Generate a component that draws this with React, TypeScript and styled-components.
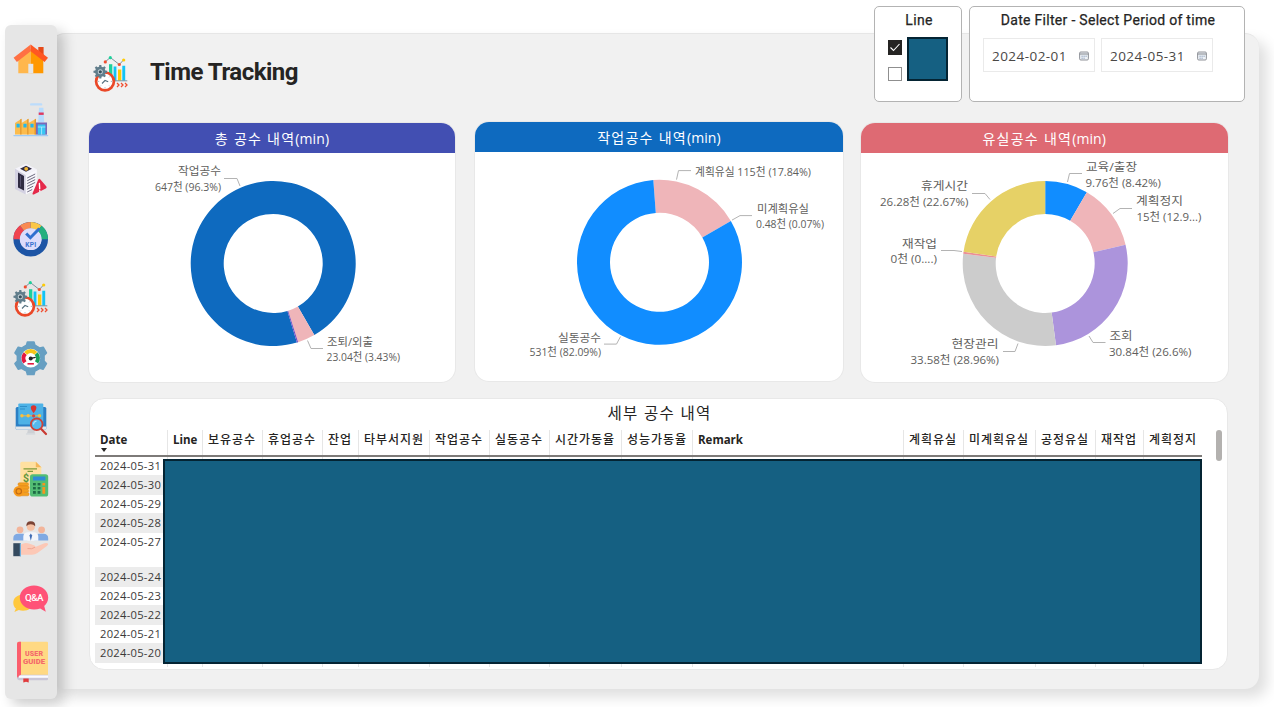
import React from 'react';
import styled, { createGlobalStyle } from 'styled-components';

const SANS = '"Open Sans", "Noto Sans", "Noto Sans CJK KR", sans-serif';
const DIN = 'Roboto, "Noto Sans CJK KR", sans-serif';

const GlobalStyle = createGlobalStyle`
  * { box-sizing: border-box; }
  body { margin: 0; background: #fff; font-family: ${SANS}; color: #252423; overflow: hidden; }
  svg { display: block; }
`;

/* ---------- page shell ---------- */

const Page = styled.div`
  display: flex;
  align-items: flex-start;
  width: 1274px;
  height: 707px;
  padding: 25px 0 0 5px;
  overflow: hidden;
`;

const Sidebar = styled.nav`
  display: flex;
  flex-direction: column;
  align-items: center;
  gap: 24px;
  width: 52px;
  height: 674px;
  padding-top: 15.5px;
  background: #e6e6e6;
  border-radius: 6px;
  box-shadow: 7px 6px 13px rgba(0, 0, 0, 0.2);
  z-index: 1;
`;

const Panel = styled.main`
  width: 1208px;
  height: 656px;
  margin: 8px 0 0 -6px;
  padding: 0 0 0 38px;
  background: #f1f1f1;
  border-radius: 14px;
  border-top: 1px solid #e6e6e6;
  box-shadow: 8px 8px 14px rgba(0, 0, 0, 0.13);
`;

const Header = styled.header`
  display: flex;
  align-items: flex-start;
  margin-top: -28px;
  height: 117px;
`;

const TitleBlock = styled.div`
  display: flex;
  align-items: center;
  gap: 21px;
  width: 785px;
  padding: 50px 0 0 4px;
`;

const Title = styled.h1`
  margin: -4px 0 0;
  font: 700 24px/30px ${DIN};
  letter-spacing: -0.5px;
`;

/* ---------- filters ---------- */

const FilterCard = styled.section<{ $w: number }>`
  width: ${(p) => p.$w}px;
  height: 96px;
  margin-right: 7px;
  background: #fff;
  border: 1px solid #b3b3b3;
  border-radius: 5px;
`;

const FilterTitle = styled.h2`
  margin: 4px 0 0 2px;
  font: 400 14px/18px ${DIN};
  letter-spacing: 0.3px;
  -webkit-text-stroke: 0.25px #252423;
  text-align: center;
`;

const LineOptions = styled.div`
  display: flex;
  gap: 5px;
  padding: 8px 0 0 13px;
`;

const Checks = styled.div`
  display: flex;
  flex-direction: column;
  gap: 12px;
  padding-top: 3px;
`;

const Check = styled.div<{ $on?: boolean }>`
  display: grid;
  place-items: center;
  width: 14px;
  height: ${(p) => (p.$on ? 14.5 : 14)}px;
  background: ${(p) => (p.$on ? '#252423' : '#fff')};
  border: 1px solid ${(p) => (p.$on ? '#252423' : '#8f8f8f')};
`;

const Swatch = styled.div`
  width: 41px;
  height: 44px;
  background: #156082;
  border: 2px solid #042433;
`;

const DateInputs = styled.div`
  display: flex;
  gap: 6px;
  padding: 9px 0 0 13px;
`;

const DateInput = styled.div`
  display: flex;
  align-items: center;
  justify-content: space-between;
  width: 112px;
  height: 34px;
  padding: 1px 5px 0 8px;
  border: 1px solid #eaeaea;
  color: #4a4846;
  font-size: 13.5px;
  line-height: 34px;
  letter-spacing: 0.45px;
`;

/* ---------- chart cards ---------- */

const Charts = styled.div`
  display: flex;
  gap: 18px;
  width: 1139px;
`;

const ChartCard = styled.section<{ $w: number; $lift?: boolean }>`
  flex: none;
  width: ${(p) => p.$w}px;
  height: 259px;
  margin: ${(p) => (p.$lift ? '-0.6px 0 0 2px' : '0')};
  background: #fff;
  border-radius: 14px;
  box-shadow: 0 0 0 1px #e8e8e8;
  overflow: hidden;
`;

const ChartTitle = styled.h3<{ $bg: string }>`
  height: 30px;
  margin: 0;
  background: ${(p) => p.$bg};
  color: #fff;
  font: 400 14px/31px ${SANS};
  letter-spacing: 0.1px;
  text-align: center;
`;

const Hangul = styled.span`
  letter-spacing: 1.25px;
`;

const ChartSvg = styled.svg`
  font: 400 11.5px ${SANS};
  fill: #605e5c;
`;

/* ---------- table ---------- */

const TableCard = styled.section`
  position: relative;
  width: 1139px;
  height: 272px;
  margin: 16px 0 0;
  padding-left: 5px;
  background: #fff;
  border: 1px solid #e8e8e8;
  border-radius: 15px;
`;

const TableTitle = styled.h3`
  height: 31px;
  margin: 0;
  padding-right: 3px;
  font: 400 15.5px/28px ${SANS};
  letter-spacing: 1.3px;
  text-align: center;
`;

const HeadRow = styled.div`
  display: flex;
  width: 1107px;
  height: 27px;
  border-bottom: 2px solid #7d7a78;
`;

const Cell = styled.div<{ $w: number; $first?: boolean }>`
  flex: none;
  width: ${(p) => p.$w}px;
  padding: 1px 0 0 5px;
  border-left: ${(p) => (p.$first ? 'none' : '1px solid #e6e6e6')};
  font-size: 12px;
  font-weight: 700;
  line-height: 18px;
  white-space: nowrap;
`;

const HeadText = styled.span<{ $ko: boolean }>`
  font-size: ${(p) => (p.$ko ? 12 : 11.5)}px;
  font-weight: ${(p) => (p.$ko ? 500 : 700)};
  letter-spacing: ${(p) => (p.$ko ? 0.95 : 0)}px;
`;

const SortMark = styled.div`
  width: 0;
  margin: -1px 0 0 1px;
  border: 3.5px solid transparent;
  border-top: 4px solid #252423;
  border-bottom: none;
`;

const TableBody = styled.div`
  display: flex;
  height: 210px;
`;

const DateColumn = styled.div`
  width: 72px;
`;

const DateRow = styled.div<{ $h: number; $alt: boolean }>`
  height: ${(p) => p.$h}px;
  padding-left: 5px;
  background: ${(p) => (p.$alt ? '#ececec' : '#fff')};
  color: #3b3a39;
  font-size: 11.2px;
  line-height: ${(p) => (p.$alt ? 20 : 18)}px;
  letter-spacing: 0.27px;
  white-space: nowrap;
`;

const Redaction = styled.div`
  position: absolute;
  left: 73px;
  top: 60px;
  width: 1039px;
  height: 205px;
  background: #156082;
  border: 2px solid #042433;
`;

const ScrollThumb = styled.div`
  position: absolute;
  right: 5px;
  top: 31px;
  width: 6px;
  height: 31px;
  border-radius: 3px;
  background: #b3b1af;
`;

/* ---------- icons ---------- */

const IconSvg = styled.svg`
  flex: none;
  overflow: visible;
`;

const Icon = ({ children }: { children: React.ReactNode }) => (
  <IconSvg width="36" height="36" viewBox="0 0 36 36">{children}</IconSvg>
);

const gearPath = (cx: number, cy: number, ro: number, ri: number, teeth: number) => {
  const pts: string[] = [];
  const step = (Math.PI * 2) / teeth;
  for (let i = 0; i < teeth; i++) {
    const a = i * step - Math.PI / 2;
    [[-0.3, ri], [-0.19, ro], [0.19, ro], [0.3, ri]].forEach(([o, r]) => {
      pts.push(`${(cx + Math.cos(a + o * step) * r).toFixed(2)},${(cy + Math.sin(a + o * step) * r).toFixed(2)}`);
    });
  }
  return `M${pts.join('L')}Z`;
};

const HomeIcon = () => (
  <Icon>
    <path d="M5.3 17.5 17.7 8v24.3H5.3z" fill="#ffb74d" />
    <path d="M17.7 8l12.6 9.5v14.8H17.7z" fill="#ff9800" />
    <path d="M15.3 22.8h5v9.6h-5z" fill="#e6e6e6" />
    <path d="M25.3 6h5.3v10h-5.3z" fill="#e64a19" />
    <path d="M17.7 3.5.6 16.8l3.3 4.1 13.8-10.6z" fill="#ff7043" />
    <path d="M17.7 3.5 35 16.8l-3.4 4.1-13.9-10.6z" fill="#ff5722" />
  </Icon>
);

const FactoryIcon = () => (
  <Icon>
    <rect x="17" y="2.2" width="12.3" height="2.4" rx="1.2" fill="#bcdcfb" />
    <path d="M26 6.8h4.4l.8 14.7h-6z" fill="#b7dcff" />
    <path d="M25.7 11.5h5v2.4h-5z" fill="#e0395e" />
    <path d="M2 33.6V22l6.5-4.3V22l7-4.3V22l7.5-4.3v15.9z" fill="#fcbc4c" />
    <path d="M7.2 18.5l1.3-.8v15.9H7.2zM14.2 18.5l1.3-.8v15.9h-1.3zM21.5 18.7l1.5-1v15.9h-1.5z" fill="#e2972e" />
    <path d="M3.5 22.8h3.2v3.6H3.5zM10.4 22.8h3.2v3.6h-3.2zM17.4 22.8h3.2v3.6h-3.2z" fill="#22b7ec" />
    <path d="M23 21.5h11v12.1H23z" fill="#7b68b8" />
    <path d="M24.8 23.5h7.6v10.1h-7.6z" fill="#38c6f4" />
    <path d="M24.8 26h7.6M28.6 26v7.6" stroke="#b9ecff" strokeWidth=".8" />
    <rect x=".3" y="34" width="35" height="1.2" rx=".6" fill="#9ecbf5" />
  </Icon>
);

const ServerAlertIcon = () => (
  <Icon>
    <path d="M2 7.8 13 2.8l10.8 5.4-11 6z" fill="#f4f3fa" />
    <path d="M2 7.8l10.8 6.4v19.3L2 28z" fill="#d3d1e2" />
    <path d="M23.8 8.2v20L12.8 33.5V14.2z" fill="#f8f7fc" />
    <path d="M7 7.7l6-2.9 6 3-6 3z" fill="#2f2b42" />
    <circle cx="13.2" cy="7.8" r="1.9" fill="#f2b632" />
    <path d="M5 11.5l6 3.4v14.7l-6-3z" fill="#2f2b42" />
    <path d="M7 14.5l1 .5v11l-1-.5z" fill="#56516e" />
    <path d="M14.2 17l8-4M14.2 19.8l8-4M14.2 22.6l8-4M14.2 25.4l8-4M14.2 28.2l6-3M14.2 31l5-2.5" stroke="#4a4660" strokeWidth=".8" />
    <path d="M25.2 18.8q1-1.8 2.2-.2l6 7q.8 1.2-.6 1.8l-12 6q-1.6.6-1.3-1z" fill="#e5294a" />
    <path d="M26.4 22.5l.3 5.2M26.8 29.6v.6" stroke="#fff" strokeWidth="1.4" strokeLinecap="round" />
  </Icon>
);

const KpiIcon = () => (
  <Icon>
    <g fill="none" strokeWidth="6.6">
      <circle cx="17.7" cy="18.2" r="14" stroke="#1d55a5" />
      <path d="M3.7 18.2A14 14 0 0 1 9 7.2" stroke="#f0434e" />
      <path d="M9 7.2a14 14 0 0 1 8.7-3" stroke="#f98a52" />
      <path d="M17.7 4.2a14 14 0 0 1 8.8 3.1" stroke="#fbc748" />
      <path d="M26.5 7.3a14 14 0 0 1 5.2 10.9" stroke="#22b07d" />
    </g>
    <circle cx="17.7" cy="18.2" r="10.9" fill="#dcdcfb" />
    <path d="M13.2 12.5l4.2 4.2 9-9.2" fill="none" stroke="#2f6fd0" strokeWidth="3" />
    <text x="17.7" y="26.2" textAnchor="middle" textLength="11" fontFamily="Roboto, sans-serif" fontSize="6.6" fontWeight="700" fill="#3a72cf">KPI</text>
  </Icon>
);

const TrackingIcon = () => (
  <Icon>
    <path d="M16 8.2h3.3v16.3H16z" fill="#1ed19b" />
    <path d="M20.6 10.5h2.8v14h-2.8zM29.3 9.8h2.9v14.7h-2.9z" fill="#12c4f5" />
    <path d="M25 13.5h3.3v11H25z" fill="#ffcb05" />
    <path d="M18 24.8h16.3" stroke="#5c7f92" strokeWidth=".8" />
    <path d="M12.3 5.8l5-4.3 9 7 4.4-4.7" fill="none" stroke="#6d8795" strokeWidth=".9" />
    <circle cx="12.3" cy="5.9" r="1.6" fill="#f04e30" />
    <circle cx="17.3" cy="1.7" r="1.6" fill="#1ed19b" />
    <circle cx="26.3" cy="8.5" r="1.6" fill="#f04e30" />
    <circle cx="30.7" cy="4" r="1.6" fill="#ffcb05" />
    <circle cx="12" cy="25.4" r="8.9" fill="#fff" stroke="#ea4828" strokeWidth="2.7" />
    <path d="M12 18.2v1.4M12 31.2v1.4M4.8 25.4h1.4M17.8 25.4h1.4M7 20.3l.9.9M16.2 29.6l.9.9M7 30.5l.9-.9M17 20.4l-.9.9" stroke="#9fb0ba" strokeWidth=".9" />
    <path d="M9 27.5l3-3 3.2 1.2" fill="none" stroke="#55717f" strokeWidth="1.1" />
    <path d={gearPath(7.3, 15.8, 6.9, 5.2, 8)} fill="#607d8b" />
    <circle cx="7.3" cy="15.8" r="2.5" fill="#c5d2d8" />
    <circle cx="7.3" cy="15.8" r="1.6" fill="#37505d" />
    <path d="M24 27l2 2-2 2M28 27l2 2-2 2M32 27l2 2-2 2" fill="none" stroke="#f04e30" strokeWidth="1.3" />
  </Icon>
);

const GaugeGearIcon = () => (
  <Icon>
    <path d={gearPath(17.7, 17.2, 16.6, 13.6, 6)} fill="#679fc2" stroke="#679fc2" strokeWidth="1.6" strokeLinejoin="round" />
    <circle cx="17.7" cy="17.2" r="13.6" fill="#679fc2" />
    <circle cx="17.7" cy="17.2" r="9.4" fill="#fff" />
    <g fill="none" strokeWidth="4">
      <path d="M11.9 21.4A6.8 6.8 0 0 1 12.3 12.6" stroke="#e5173f" />
      <path d="M12.6 12.3A7 7 0 0 1 22.8 12.3" stroke="#f5c518" />
      <path d="M23.1 12.6A6.8 6.8 0 0 1 23.5 21.4" stroke="#19a05a" />
    </g>
    <path d="M14.5 22.8h6.4" stroke="#e5173f" strokeWidth="1.6" />
    <path d="M17.7 17.4l5-1" stroke="#222" strokeWidth="1.4" />
    <circle cx="17.7" cy="17.4" r="2" fill="#222" />
  </Icon>
);

const MonitorIcon = () => (
  <Icon>
    <path d="M15 28.5h6l1 4.2h-8z" fill="#cdd0d4" />
    <rect x="12.8" y="32.3" width="9.6" height="1.4" rx=".7" fill="#d6dade" />
    <rect x="2.7" y="6" width="30.6" height="22.8" rx="1.5" fill="#2b7fc4" />
    <path d="M2.7 25.5h30.6v1.8q0 1.5-1.5 1.5H4.2q-1.5 0-1.5-1.5z" fill="#e2e6ea" />
    <rect x="5.3" y="2.5" width="25" height="21" rx="1" fill="#4db2e6" />
    <path d="M7 5.5h7M7 8h5" stroke="#2f8fc9" strokeWidth="1" />
    <path d="M8.5 14.8H28" stroke="#f4b73c" strokeWidth="1" />
    <g fill="#fbbf3c">
      <circle cx="8.9" cy="14.8" r="1.7" /><circle cx="15.2" cy="14.8" r="1.7" /><circle cx="26.5" cy="14.8" r="1.7" />
    </g>
    <circle cx="20.6" cy="14.8" r="1.6" fill="#d8463e" />
    <path d="M20.6 12.2q-2.8-3.2-2.8-5.2a2.8 2.8 0 0 1 5.6 0q0 2-2.8 5.2z" fill="#d8352f" />
    <path d="M28 27.7l5 5.3" stroke="#c93b33" strokeWidth="2.2" strokeLinecap="round" />
    <circle cx="23.7" cy="23.3" r="5.8" fill="#56b9ec" stroke="#cf4238" strokeWidth="1.8" />
    <path d="M20.5 23.5a3.4 3.4 0 0 1 3-3.4" fill="none" stroke="#b6e4fb" strokeWidth="1.1" />
  </Icon>
);

const CostIcon = () => (
  <Icon>
    <path d="M8.8.8h14l5.5 5.5V30q0 1-1 1H8.3q-1 0-1-1V2.3Q7.3.8 8.8.8z" fill="#ffe0a0" />
    <path d="M22.8.8l5.5 5.5h-5.5z" fill="#f3b65b" />
    <path d="M10.5 7.8H24M14.5 10.3H20" stroke="#7f9a3a" strokeWidth="1.2" />
    <text x="13" y="20.5" textAnchor="middle" fontFamily="Roboto, sans-serif" fontSize="10.5" fontWeight="700" fill="#63953a">$</text>
    <g fill="#f5a01f" stroke="#d9831a" strokeWidth=".5">
      <rect x="5" y="21.8" width="10.5" height="3.2" rx="1.4" /><rect x="6" y="25" width="10" height="3.2" rx="1.4" />
      <rect x="5.5" y="28.2" width="10" height="3.2" rx="1.4" /><rect x="5.5" y="31.4" width="10.5" height="3.4" rx="1.4" />
    </g>
    <circle cx="5.8" cy="30.3" r="5.3" fill="#f79a1c" />
    <circle cx="5.8" cy="30.3" r="2.7" fill="none" stroke="#c46c12" strokeWidth="1.2" />
    <rect x="17" y="13.2" width="18.2" height="22.4" rx="2.6" fill="#53bd74" />
    <rect x="20" y="15.6" width="12.4" height="4" rx=".6" fill="#2e8bd6" />
    <g fill="#1e6b45">
      <rect x="20" y="22" width="2.8" height="2.4" /><rect x="24.6" y="22" width="2.8" height="2.4" />
      <rect x="20" y="26" width="2.8" height="2.4" /><rect x="24.6" y="26" width="2.8" height="2.4" />
      <rect x="20" y="30" width="2.8" height="2.8" /><rect x="24.6" y="30" width="2.8" height="2.8" />
    </g>
    <path d="M29.4 22h2.8v2.4h-2.8zM29.4 26h2.8v6.8h-2.8z" fill="#f7941e" />
  </Icon>
);

const PeopleIcon = () => (
  <Icon>
    <circle cx="7" cy="8.8" r="3.4" fill="#f3b59b" />
    <circle cx="28.6" cy="8.8" r="3.4" fill="#f3b59b" />
    <path d="M.3 19.6v-2.2q0-4.6 5-4.6h4q5 0 5 4.6v2.2zM21.4 19.6v-2.2q0-4.6 5-4.6h4q4.8 0 4.8 4.6v2.2z" fill="#7fa9e3" />
    <path d="M10.3 19.8v-4q0-4.6 5-4.6h5q5 0 5 4.6v4z" fill="#f3f6fb" />
    <path d="M17.8 12.5l1.3 2-1.3 5.3-1.3-5.3z" fill="#3f6cb3" />
    <circle cx="17.8" cy="5.8" r="4" fill="#f6c1a4" />
    <path d="M13.4 5.2Q13 .2 17.8.2t4.4 5q-1.6-2-4.4-2t-4.4 2z" fill="#7b4334" />
    <path d="M7.5 23.8q4.5-2.8 8.3-1.2l4.4 1.3q2.6.6 2 2.2l6.8-2.8q4.4-2 5.9-.7 1 .8-1 2.3l-9.4 7.1q-2.5 1.7-5.5 1.7H7.5z" fill="#fcc8b6" />
    <path d="M14.5 27.6q4.5 1 7.7-1.5" fill="none" stroke="#ee9f8c" strokeWidth=".9" />
    <path d="M.3 22.2h7.5v13H.3z" fill="#34495e" />
    <path d="M6.8 22.2H8v13H6.8z" fill="#6fb1e0" />
  </Icon>
);

const QaIcon = () => (
  <Icon>
    <path d="M10 13.5c6 0 9.8 3.6 9.8 8.3s-4 8-9.8 8c-1.5 0-3-.2-4.2-.7L1.4 31l1.5-3.4C1.2 26.2.3 24.2.3 21.8c0-4.7 4-8.3 9.7-8.3z" fill="#ffc83d" />
    <path d="M21 4.5c8 0 14.2 5.4 14.2 12 0 3.4-1.5 6.3-4 8.5l1.6 5.8-5.6-3.3c-1.9.7-4 1-6.2 1C13 28.5 6.8 23.2 6.8 16.5S13 4.5 21 4.5z" fill="#ff5277" />
    <text x="21.3" y="20" textAnchor="middle" textLength="18.5" fontFamily="Roboto, sans-serif" fontSize="9.8" fontWeight="500" fill="#fff">Q&amp;A</text>
  </Icon>
);

const GuideIcon = () => (
  <Icon>
    <path d="M4 33h31v5q0 1.2-1.2 1.2H6.5Q4 39.2 4 36.5z" fill="#c9c6d6" />
    <path d="M6 34.4h29v2.4H6z" fill="#fbfaff" />
    <path d="M6 .8h28q1 0 1 1v32H4V2.8Q4 .8 6 .8z" fill="#ffd983" />
    <path d="M6 .8h2v33q-2.5.3-3.2 3Q4 36 4 35V2.8Q4 .8 6 .8z" fill="#fb5e6d" />
    <path d="M10.3 37.5h5.4v4l-2.7-.7-2.7.7z" fill="#e03a3c" />
    <g fontFamily="Roboto, sans-serif" fontSize="7" fontWeight="900" fill="#f4696b" textAnchor="middle">
      <text x="21" y="15.2" textLength="18">USER</text>
      <text x="21" y="23.2" textLength="22" lengthAdjust="spacingAndGlyphs">GUIDE</text>
    </g>
  </Icon>
);

const CalendarIcon = () => (
  <svg width="10" height="10" viewBox="0 0 10 10">
    <rect x=".6" y="1" width="8.8" height="8" rx="1.2" fill="#eef2f7" stroke="#83878d" strokeWidth=".9" />
    <path d="M.6 3h8.8" stroke="#83878d" strokeWidth="1" />
    <path d="M2.5 5.2h5.4M2.5 7.2h3.2" stroke="#8296b3" strokeWidth="1" strokeDasharray="1.2 .8" />
  </svg>
);

/* ---------- donut chart ---------- */

type Slice = { from: number; to: number; color: string };
type Label = { x: number; y: number; w: number; text: string };

const OUTER = 82.5;
const INNER = 49.5;

const slicePath = (cx: number, cy: number, { from, to }: Slice) => {
  const at = (deg: number, r: number) => {
    const a = (deg * Math.PI) / 180;
    return `${(cx + Math.sin(a) * r).toFixed(2)} ${(cy - Math.cos(a) * r).toFixed(2)}`;
  };
  const big = to - from > 180 ? 1 : 0;
  return `M${at(from, OUTER)}A${OUTER} ${OUTER} 0 ${big} 1 ${at(to, OUTER)}L${at(to, INNER)}A${INNER} ${INNER} 0 ${big} 0 ${at(from, INNER)}Z`;
};

interface DonutProps {
  title: string;
  bg: string;
  origin: [number, number];
  width: number;
  center: [number, number];
  slices: Slice[];
  labels: Label[];
  leaders: string[];
  lift?: boolean;
}

const DonutCard = ({ title, bg, origin, width, center, slices, labels, leaders, lift }: DonutProps) => (
  <ChartCard $w={width} $lift={lift}>
    <ChartTitle $bg={bg}><Hangul>{title}</Hangul>(min)</ChartTitle>
    <ChartSvg width={width} height={229} viewBox={`${origin[0]} ${origin[1]} ${width} 229`}>
      {slices.map((s) => (
        <path key={s.from} d={slicePath(center[0], center[1], s)} fill={s.color} />
      ))}
      {leaders.map((points) => (
        <polyline key={points} points={points} fill="none" stroke="#b3b3b3" strokeWidth="1" />
      ))}
      {labels.map((l) => (
        <text key={l.text} x={l.x} y={l.y} textLength={l.w} lengthAdjust="spacingAndGlyphs">{l.text}</text>
      ))}
    </ChartSvg>
  </ChartCard>
);

const donuts: DonutProps[] = [
  {
    title: '총 공수 내역',
    bg: '#424fb2',
    origin: [89, 153],
    width: 366,
    center: [273.2, 263.5],
    slices: [
      { from: 163.3, to: 510.1, color: '#0e6abf' },
      { from: 150.1, to: 162.4, color: '#efb5b9' },
      { from: 162.4, to: 163.3, color: '#744ec2' },
    ],
    labels: [
      { x: 178, y: 175, w: 43, text: '작업공수' },
      { x: 155, y: 190.5, w: 66, text: '647천 (96.3%)' },
      { x: 327, y: 345.5, w: 46, text: '조퇴/외출' },
      { x: 326.5, y: 360.5, w: 73.5, text: '23.04천 (3.43%)' },
    ],
    leaders: ['224,178.5 237,178.5 240,186', '307.5,340.5 311,348.5 323,348.5'],
  },
  {
    title: '작업공수 내역',
    bg: '#0e6abf',
    origin: [475, 152.4],
    width: 368,
    lift: true,
    center: [659.5, 262.7],
    slices: [
      { from: -4.3, to: 59.9, color: '#efb5b9' },
      { from: 59.9, to: 355.7, color: '#118dff' },
    ],
    labels: [
      { x: 695, y: 176, w: 116, text: '계획유실 115천 (17.84%)' },
      { x: 757, y: 213, w: 52, text: '미계획유실' },
      { x: 756, y: 228.5, w: 68, text: '0.48천 (0.07%)' },
      { x: 558, y: 342, w: 43, text: '실동공수' },
      { x: 529.5, y: 356.5, w: 71.5, text: '531천 (82.09%)' },
    ],
    leaders: ['676.5,180 678.5,171 691,171', '732,220.5 740,216 752,216', '620.5,337 616.5,344.5 604,344.5'],
  },
  {
    title: '유실공수 내역',
    bg: '#de6a73',
    origin: [861, 153],
    width: 366.5,
    center: [1045.2, 263.5],
    slices: [
      { from: 0, to: 30.3, color: '#118dff' },
      { from: 30.3, to: 76.9, color: '#efb5b9' },
      { from: 76.9, to: 172.5, color: '#ac94dc' },
      { from: 172.5, to: 276.7, color: '#cccccc' },
      { from: 276.7, to: 278.2, color: '#eb8f95' },
      { from: 278.2, to: 360, color: '#e6d166' },
    ],
    labels: [
      { x: 1086, y: 171, w: 51, text: '교육/출장' },
      { x: 1085.5, y: 187, w: 75.5, text: '9.76천 (8.42%)' },
      { x: 1136, y: 205, w: 47, text: '계획정지' },
      { x: 1136.5, y: 221, w: 65, text: '15천 (12.9...)' },
      { x: 921, y: 190, w: 47, text: '휴게시간' },
      { x: 880, y: 206, w: 88.5, text: '26.28천 (22.67%)' },
      { x: 902, y: 247.5, w: 35, text: '재작업' },
      { x: 890.5, y: 263, w: 46.5, text: '0천 (0....)' },
      { x: 951.5, y: 348, w: 47, text: '현장관리' },
      { x: 910.5, y: 364, w: 88.5, text: '33.58천 (28.96%)' },
      { x: 1109.5, y: 339.5, w: 23, text: '조회' },
      { x: 1109, y: 355.5, w: 82.5, text: '30.84천 (26.6%)' },
    ],
    leaders: [
      '1067.5,182 1069.5,173.5 1082,173.5',
      '1113,213.5 1120,208.5 1132,208.5',
      '972,193.5 985,193.5 990,199.5',
      '941,250.5 954,250.5 962,251.5',
      '1018,343.5 1015,351.5 1003,351.5',
      '1089,336 1093,342.5 1105.5,342.5',
    ],
  },
];

const columns: [string, number][] = [
  ['Date', 72], ['Line', 35], ['보유공수', 60], ['휴업공수', 60], ['잔업', 36], ['타부서지원', 71],
  ['작업공수', 60], ['실동공수', 60], ['시간가동율', 72], ['성능가동율', 71], ['Remark', 211],
  ['계획유실', 60], ['미계획유실', 72], ['공정유실', 60], ['재작업', 48], ['계획정지', 59],
];

const dates: [string, number][] = [
  ['2024-05-31', 18], ['2024-05-30', 20], ['2024-05-29', 18], ['2024-05-28', 20], ['2024-05-27', 34],
  ['2024-05-24', 20], ['2024-05-23', 18], ['2024-05-22', 20], ['2024-05-21', 18], ['2024-05-20', 20],
];

export default function App() {
  return (
    <>
      <GlobalStyle />
      <Page>
        <Sidebar>
          <HomeIcon />
          <FactoryIcon />
          <ServerAlertIcon />
          <KpiIcon />
          <TrackingIcon />
          <GaugeGearIcon />
          <MonitorIcon />
          <CostIcon />
          <PeopleIcon />
          <QaIcon />
          <GuideIcon />
        </Sidebar>
        <Panel>
          <Header>
            <TitleBlock>
              <TrackingIcon />
              <Title>Time Tracking</Title>
            </TitleBlock>
            <FilterCard $w={88}>
              <FilterTitle>Line</FilterTitle>
              <LineOptions>
                <Checks>
                  <Check $on>
                    <svg width="12" height="12" viewBox="0 0 12 12">
                      <path d="M1.5 6.5l3 3 6-6.5" fill="none" stroke="#fff" strokeWidth="1.1" />
                    </svg>
                  </Check>
                  <Check />
                </Checks>
                <Swatch />
              </LineOptions>
            </FilterCard>
            <FilterCard $w={276}>
              <FilterTitle>Date Filter - Select Period of time</FilterTitle>
              <DateInputs>
                <DateInput>2024-02-01<CalendarIcon /></DateInput>
                <DateInput>2024-05-31<CalendarIcon /></DateInput>
              </DateInputs>
            </FilterCard>
          </Header>
          <Charts>
            {donuts.map((d) => (
              <DonutCard key={d.title} {...d} />
            ))}
          </Charts>
          <TableCard>
            <TableTitle>세부 공수 내역</TableTitle>
            <HeadRow>
              {columns.map(([name, w], i) => (
                <Cell key={name} $w={w} $first={i === 0}>
                  <HeadText $ko={/[가-힣]/.test(name)}>{name}</HeadText>
                  {i === 0 && <SortMark />}
                </Cell>
              ))}
            </HeadRow>
            <TableBody>
              <DateColumn>
                {dates.map(([d, h], i) => (
                  <DateRow key={d} $h={h} $alt={i % 2 === 1}>{d}</DateRow>
                ))}
              </DateColumn>
              {columns.slice(1).map(([name, w]) => (
                <Cell key={name} $w={w} />
              ))}
            </TableBody>
            <Redaction />
            <ScrollThumb />
          </TableCard>
        </Panel>
      </Page>
    </>
  );
}
